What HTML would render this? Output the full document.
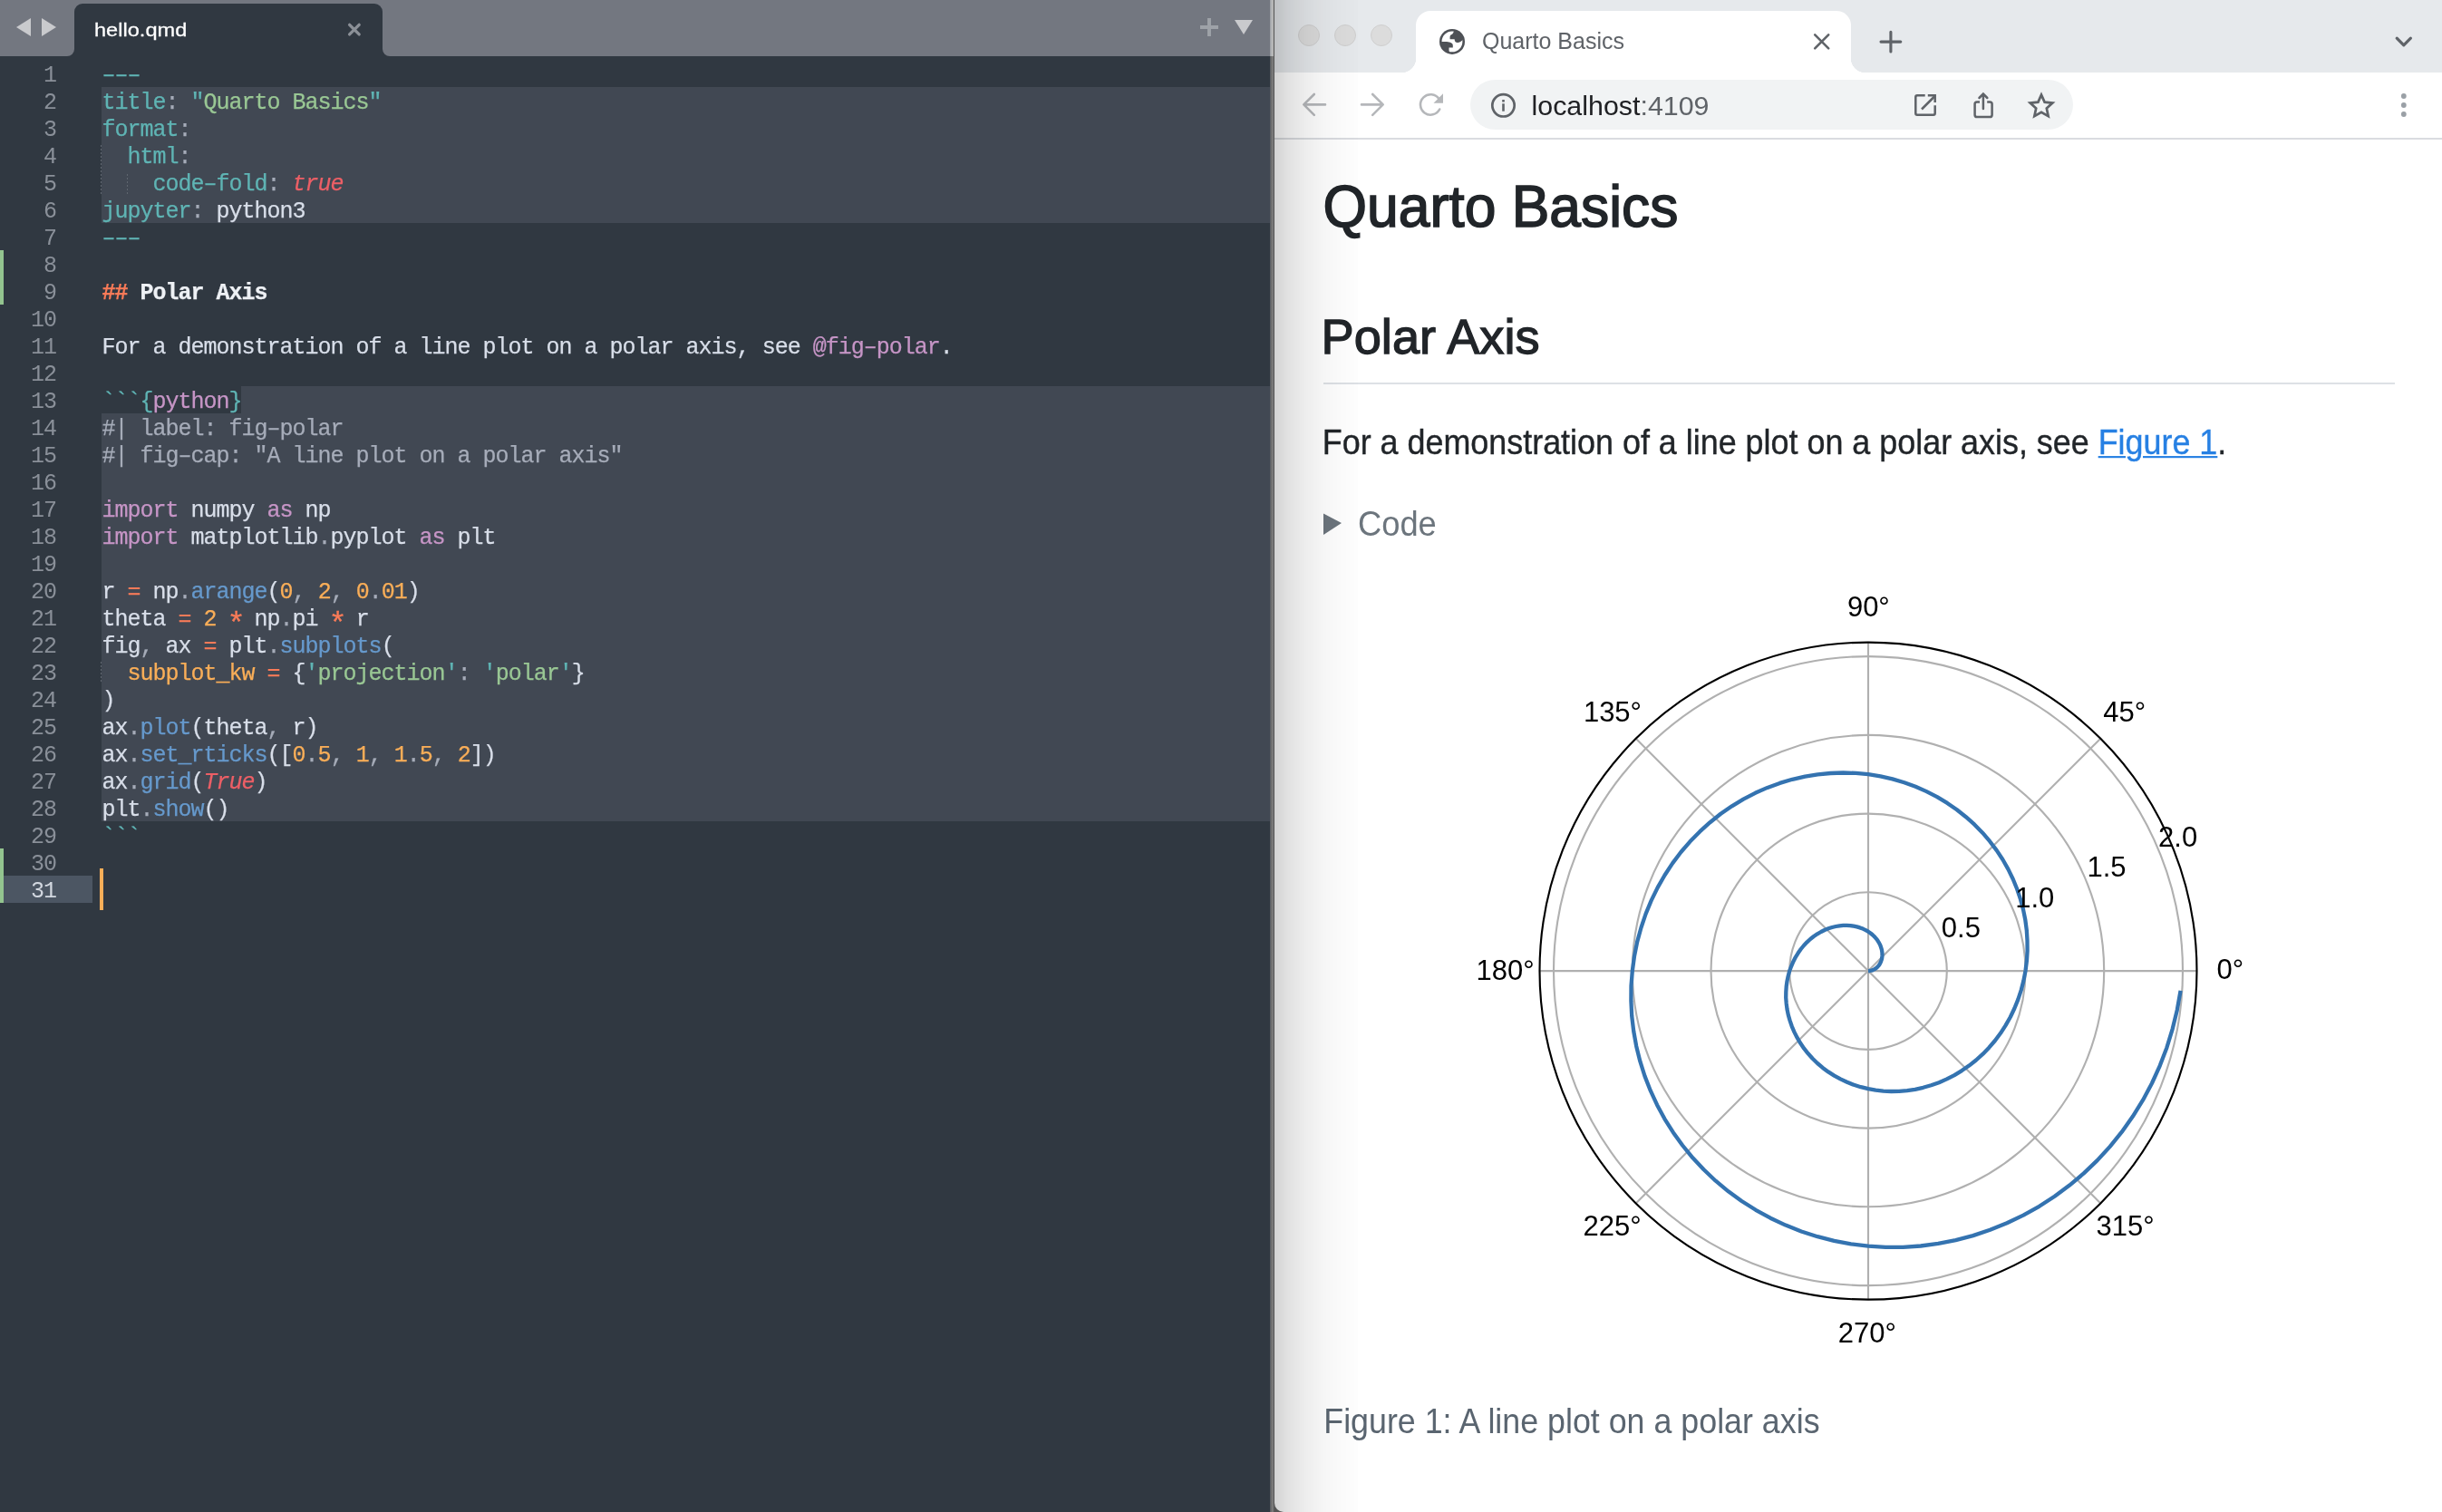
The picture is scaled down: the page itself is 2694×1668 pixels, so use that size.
<!DOCTYPE html>
<html><head><meta charset="utf-8">
<style>
html,body{margin:0;padding:0;}
body{width:2694px;height:1668px;overflow:hidden;position:relative;will-change:transform;background:#303841;font-family:"Liberation Sans",sans-serif;}
.abs{position:absolute;}
#ed{position:absolute;left:0;top:0;width:1402px;height:1668px;background:#303841;overflow:hidden;}
.tb{position:absolute;background:#737780;}
.ln{position:absolute;left:0;width:62px;text-align:right;font-family:"Liberation Mono",monospace;font-size:25px;letter-spacing:-1px;line-height:36px;color:#8a9099;white-space:pre;}
.cl{position:absolute;left:112.5px;font-family:"Liberation Mono",monospace;font-size:25px;letter-spacing:-1px;line-height:36px;color:#d8dee9;white-space:pre;-webkit-text-stroke:0.25px currentColor;}
.ast{display:inline-block;transform:translateY(6px) scale(1.35);}
.ig{position:absolute;width:1.4px;background:repeating-linear-gradient(to bottom,#5f666f 0 2px,transparent 2px 4px);}
.hl{position:absolute;background:#414853;}
.c{color:#5fb4b4}.g{color:#99c794}.p{color:#c695c6}.o{color:#f9ae58}.r{color:#ec5f66;font-style:italic}
.r2{color:#f97b58}.r2b{color:#f97b58;font-weight:bold}.wb{color:#eef1f5;font-weight:bold}.cur{color:#d3d8e0}.b{color:#6699cc}.cm{color:#a6acb9}.pu{color:#a6acb9}.w{color:#d8dee9}
</style></head><body>
<div id="ed">
  <!-- tab bar -->
  <div class="tb" style="left:82px;top:0;width:340px;height:20px;"></div>
  <div class="tb" style="left:0;top:0;width:82px;height:62px;border-bottom-right-radius:8px;"></div>
  <div class="tb" style="left:422px;top:0;width:980px;height:62px;border-bottom-left-radius:8px;"></div>
  <div class="abs" style="left:82px;top:4px;width:340px;height:58px;background:#303841;border-radius:9px 9px 0 0;"></div>
  <svg class="abs" style="left:0;top:0" width="80" height="62"><polygon points="18,30 34,20 34,40" fill="#c9cacd"/><polygon points="46,20 62,30 46,40" fill="#c9cacd"/></svg>
  <div class="abs" style="left:104px;top:16.5px;font-size:23.6px;color:#fff;line-height:30px;-webkit-text-stroke:0.3px #fff;transform:scaleY(0.87);transform-origin:0 24px;">hello.qmd</div>
  <svg class="abs" style="left:376px;top:18px" width="30" height="30"><path d="M9.6 9.3 L20.2 19.9 M20.2 9.3 L9.6 19.9" stroke="#8b9097" stroke-width="3.3" stroke-linecap="round"/></svg>
  <svg class="abs" style="left:1316px;top:12px" width="80" height="36"><path d="M18 8 V28 M8 18 H28" stroke="#9ea2a8" stroke-width="3.9"/><polygon points="46,10 66,10 56,26" fill="#c9cacd"/></svg>

  <!-- highlights -->
  <div class="hl" style="left:112px;top:96px;width:1290px;height:150px;"></div>
  <div class="hl" style="left:266px;top:426px;width:1136px;height:30px;"></div>
  <div class="hl" style="left:112px;top:456px;width:1290px;height:450px;"></div>
  <!-- gutter marks -->
  <div class="abs" style="left:0;top:276px;width:4px;height:60px;background:#93c48f;"></div>
  <div class="abs" style="left:0;top:936px;width:4px;height:60px;background:#93c48f;"></div>
  <div class="abs" style="left:4px;top:966px;width:98px;height:30px;background:#4c5663;"></div>
  <div class="abs" style="left:110px;top:958px;width:4px;height:46px;background:#f9ae58;"></div>

  <div class="ig" style="left:111px;top:160px;height:54px;"></div>
  <div class="ig" style="left:139.5px;top:192px;height:22px;"></div>
  <div class="ig" style="left:111px;top:730px;height:24px;"></div>
  <div id="lines">
<div class="ln" style="top:66px">1</div>
<div class="cl" style="top:66px"><span class="c">–––</span></div>
<div class="ln" style="top:96px">2</div>
<div class="cl" style="top:96px"><span class="c">title</span><span class="pu">:</span><span class="w"> </span><span class="c">"</span><span class="g">Quarto Basics</span><span class="c">"</span></div>
<div class="ln" style="top:126px">3</div>
<div class="cl" style="top:126px"><span class="c">format</span><span class="pu">:</span></div>
<div class="ln" style="top:156px">4</div>
<div class="cl" style="top:156px"><span class="w">  </span><span class="c">html</span><span class="pu">:</span></div>
<div class="ln" style="top:186px">5</div>
<div class="cl" style="top:186px"><span class="w">    </span><span class="c">code–fold</span><span class="pu">:</span><span class="w"> </span><span class="r">true</span></div>
<div class="ln" style="top:216px">6</div>
<div class="cl" style="top:216px"><span class="c">jupyter</span><span class="pu">:</span><span class="w"> python3</span></div>
<div class="ln" style="top:246px">7</div>
<div class="cl" style="top:246px"><span class="c">–––</span></div>
<div class="ln" style="top:276px">8</div>
<div class="ln" style="top:306px">9</div>
<div class="cl" style="top:306px"><span class="r2b">##</span><span class="wb"> Polar Axis</span></div>
<div class="ln" style="top:336px">10</div>
<div class="ln" style="top:366px">11</div>
<div class="cl" style="top:366px"><span class="w">For a demonstration of a line plot on a polar axis, see </span><span class="p">@fig–polar</span><span class="w">.</span></div>
<div class="ln" style="top:396px">12</div>
<div class="ln" style="top:426px">13</div>
<div class="cl" style="top:426px"><span class="c">```{</span><span class="p">python</span><span class="c">}</span></div>
<div class="ln" style="top:456px">14</div>
<div class="cl" style="top:456px"><span class="cm">#| label: fig–polar</span></div>
<div class="ln" style="top:486px">15</div>
<div class="cl" style="top:486px"><span class="cm">#| fig–cap: "A line plot on a polar axis"</span></div>
<div class="ln" style="top:516px">16</div>
<div class="ln" style="top:546px">17</div>
<div class="cl" style="top:546px"><span class="p">import</span><span class="w"> numpy </span><span class="p">as</span><span class="w"> np</span></div>
<div class="ln" style="top:576px">18</div>
<div class="cl" style="top:576px"><span class="p">import</span><span class="w"> matplotlib</span><span class="pu">.</span><span class="w">pyplot </span><span class="p">as</span><span class="w"> plt</span></div>
<div class="ln" style="top:606px">19</div>
<div class="ln" style="top:636px">20</div>
<div class="cl" style="top:636px"><span class="w">r </span><span class="r2">=</span><span class="w"> np</span><span class="pu">.</span><span class="b">arange</span><span class="w">(</span><span class="o">0</span><span class="pu">,</span><span class="o"> 2</span><span class="pu">,</span><span class="o"> 0</span><span class="pu">.</span><span class="o">01</span><span class="w">)</span></div>
<div class="ln" style="top:666px">21</div>
<div class="cl" style="top:666px"><span class="w">theta </span><span class="r2">=</span><span class="o"> 2</span><span class="r2"> <span class="ast">*</span></span><span class="w"> np</span><span class="pu">.</span><span class="w">pi </span><span class="r2"><span class="ast">*</span></span><span class="w"> r</span></div>
<div class="ln" style="top:696px">22</div>
<div class="cl" style="top:696px"><span class="w">fig</span><span class="pu">,</span><span class="w"> ax </span><span class="r2">=</span><span class="w"> plt</span><span class="pu">.</span><span class="b">subplots</span><span class="w">(</span></div>
<div class="ln" style="top:726px">23</div>
<div class="cl" style="top:726px"><span class="w">  </span><span class="o">subplot_kw</span><span class="r2"> =</span><span class="w"> {</span><span class="c">'</span><span class="g">projection</span><span class="c">'</span><span class="pu">:</span><span class="c"> '</span><span class="g">polar</span><span class="c">'</span><span class="w">}</span></div>
<div class="ln" style="top:756px">24</div>
<div class="cl" style="top:756px"><span class="w">)</span></div>
<div class="ln" style="top:786px">25</div>
<div class="cl" style="top:786px"><span class="w">ax</span><span class="pu">.</span><span class="b">plot</span><span class="w">(theta</span><span class="pu">,</span><span class="w"> r)</span></div>
<div class="ln" style="top:816px">26</div>
<div class="cl" style="top:816px"><span class="w">ax</span><span class="pu">.</span><span class="b">set_rticks</span><span class="w">([</span><span class="o">0</span><span class="pu">.</span><span class="o">5</span><span class="pu">,</span><span class="o"> 1</span><span class="pu">,</span><span class="o"> 1</span><span class="pu">.</span><span class="o">5</span><span class="pu">,</span><span class="o"> 2</span><span class="w">])</span></div>
<div class="ln" style="top:846px">27</div>
<div class="cl" style="top:846px"><span class="w">ax</span><span class="pu">.</span><span class="b">grid</span><span class="w">(</span><span class="r">True</span><span class="w">)</span></div>
<div class="ln" style="top:876px">28</div>
<div class="cl" style="top:876px"><span class="w">plt</span><span class="pu">.</span><span class="b">show</span><span class="w">()</span></div>
<div class="ln" style="top:906px">29</div>
<div class="cl" style="top:906px"><span class="c">```</span></div>
<div class="ln" style="top:936px">30</div>
<div class="ln cur" style="top:966px">31</div>
</div>
</div>

<div class="abs" style="left:1404px;top:1640px;width:20px;height:28px;background:#666;"></div>
<div id="br" style="position:absolute;left:1406px;top:0;width:1288px;height:1668px;background:#fff;overflow:hidden;border-bottom-left-radius:10px;">
  <div class="abs" style="left:0;top:0;width:1288px;height:80px;background:#e6e9ec;"></div>
  <svg class="abs" style="left:0;top:0" width="140" height="80">
    <circle cx="38" cy="39" r="11.5" fill="#dcdcdc" stroke="#cfcfcf" stroke-width="1"/>
    <circle cx="78" cy="39" r="11.5" fill="#dcdcdc" stroke="#cfcfcf" stroke-width="1"/>
    <circle cx="118" cy="39" r="11.5" fill="#dcdcdc" stroke="#cfcfcf" stroke-width="1"/>
  </svg>
  <div id="btab" class="abs" style="left:156px;top:12px;width:480px;height:68px;background:#fff;border-radius:16px 16px 0 0;"></div>
  <div class="abs" style="left:140px;top:64px;width:16px;height:16px;background:radial-gradient(circle at 0 0, #e6e9ec 16px, #fff 16.5px);"></div>
  <div class="abs" style="left:636px;top:64px;width:16px;height:16px;background:radial-gradient(circle at 100% 0, #e6e9ec 16px, #fff 16.5px);"></div>
  <div class="abs" style="left:229px;top:27px;font-size:25px;color:#5f6368;line-height:36px;">Quarto Basics</div>
  <div class="abs" style="left:0;top:80px;width:1288px;height:72px;background:#fff;"></div>
  <div class="abs" style="left:0;top:152px;width:1288px;height:2px;background:#dadce0;"></div>
  <div class="abs" style="left:216px;top:88px;width:665px;height:55px;background:#f1f3f4;border-radius:28px;"></div>
  <div class="abs" style="left:283.5px;top:97.5px;font-size:30.4px;color:#202124;line-height:36px;">localhost<span style="color:#5f6368">:4109</span></div>
  <div id="content"></div>
</div>

<!-- page content -->
<div class="abs" style="left:1459.6px;top:198.2px;font-size:62.4px;line-height:62.4px;transform:scaleY(1.03);transform-origin:0 52.8px;color:#212529;-webkit-text-stroke:1.5px #212529;white-space:nowrap">Quarto Basics</div>
<div class="abs" style="left:1457.6px;top:344.1px;font-size:54.2px;line-height:54.2px;color:#212529;-webkit-text-stroke:1.3px #212529;white-space:nowrap">Polar Axis</div>
<div class="abs" style="left:1460px;top:422px;width:1182px;height:2px;background:#dde1e5"></div>
<div class="abs" style="left:1458.8px;top:471.5px;font-size:35.9px;line-height:35.9px;transform:scaleY(1.08);transform-origin:0 30.4px;color:#212529;white-space:nowrap;-webkit-text-stroke:0.35px #212529;">For a demonstration of a line plot on a polar axis, see <span style="color:#2780e3;-webkit-text-stroke:0.35px #2780e3;text-decoration:underline;text-decoration-thickness:2px;text-underline-offset:1.6px">Figure 1</span>.</div>
<svg class="abs" style="left:1458px;top:564px" width="26" height="28"><polygon points="2,2.6 22,13 2,26" fill="#6c757d"/></svg>
<div class="abs" style="left:1498px;top:561.3px;font-size:36.3px;line-height:36.3px;transform:scaleY(1.07);transform-origin:0 30.7px;color:#6c757d;white-space:nowrap">Code</div>
<div class="abs" style="left:1460.3px;top:1551.8px;font-size:35.8px;line-height:35.8px;transform:scaleY(1.08);transform-origin:0 30.3px;color:#5a6570;white-space:nowrap">Figure 1: A line plot on a polar axis</div>
<svg class="abs" style="left:0;top:0" width="2694" height="1668" viewBox="0 0 2694 1668">
<circle cx="2061.0" cy="1071.1" r="86.8" fill="none" stroke="#b0b0b0" stroke-width="2.13"/><circle cx="2061.0" cy="1071.1" r="173.5" fill="none" stroke="#b0b0b0" stroke-width="2.13"/><circle cx="2061.0" cy="1071.1" r="260.2" fill="none" stroke="#b0b0b0" stroke-width="2.13"/><circle cx="2061.0" cy="1071.1" r="347.0" fill="none" stroke="#b0b0b0" stroke-width="2.13"/><line x1="2061.0" y1="1071.1" x2="2423.5" y2="1071.1" stroke="#b0b0b0" stroke-width="2.13"/><line x1="2061.0" y1="1071.1" x2="2317.3" y2="814.8" stroke="#b0b0b0" stroke-width="2.13"/><line x1="2061.0" y1="1071.1" x2="2061.0" y2="708.6" stroke="#b0b0b0" stroke-width="2.13"/><line x1="2061.0" y1="1071.1" x2="1804.7" y2="814.8" stroke="#b0b0b0" stroke-width="2.13"/><line x1="2061.0" y1="1071.1" x2="1698.5" y2="1071.1" stroke="#b0b0b0" stroke-width="2.13"/><line x1="2061.0" y1="1071.1" x2="1804.7" y2="1327.4" stroke="#b0b0b0" stroke-width="2.13"/><line x1="2061.0" y1="1071.1" x2="2061.0" y2="1433.6" stroke="#b0b0b0" stroke-width="2.13"/><line x1="2061.0" y1="1071.1" x2="2317.3" y2="1327.4" stroke="#b0b0b0" stroke-width="2.13"/>
<circle cx="2061.0" cy="1071.1" r="362.5" fill="none" stroke="#000" stroke-width="2.13"/>
<path d="M2061.0,1071.1 L2062.7,1071.0 L2064.4,1070.7 L2066.1,1070.1 L2067.7,1069.4 L2069.3,1068.4 L2070.7,1067.3 L2072.0,1065.9 L2073.2,1064.4 L2074.2,1062.7 L2075.0,1060.9 L2075.7,1058.9 L2076.2,1056.8 L2076.4,1054.7 L2076.5,1052.4 L2076.3,1050.0 L2075.9,1047.7 L2075.2,1045.3 L2074.3,1042.8 L2073.1,1040.4 L2071.7,1038.1 L2070.1,1035.8 L2068.2,1033.6 L2066.0,1031.5 L2063.6,1029.5 L2061.0,1027.7 L2058.2,1026.1 L2055.1,1024.6 L2051.9,1023.4 L2048.5,1022.4 L2044.9,1021.6 L2041.2,1021.1 L2037.4,1020.9 L2033.4,1020.9 L2029.4,1021.3 L2025.3,1022.0 L2021.2,1023.0 L2017.1,1024.3 L2012.9,1026.0 L2008.9,1028.0 L2004.9,1030.3 L2000.9,1033.0 L1997.1,1036.0 L1993.5,1039.3 L1990.0,1043.0 L1986.7,1047.0 L1983.7,1051.3 L1980.9,1055.8 L1978.4,1060.7 L1976.2,1065.8 L1974.2,1071.1 L1972.7,1076.7 L1971.5,1082.4 L1970.7,1088.3 L1970.3,1094.4 L1970.2,1100.6 L1970.7,1106.9 L1971.5,1113.2 L1972.8,1119.6 L1974.6,1125.9 L1976.8,1132.3 L1979.5,1138.6 L1982.6,1144.7 L1986.2,1150.8 L1990.2,1156.7 L1994.7,1162.3 L1999.6,1167.8 L2005.0,1173.0 L2010.8,1177.9 L2016.9,1182.4 L2023.5,1186.6 L2030.4,1190.4 L2037.6,1193.8 L2045.1,1196.8 L2052.9,1199.2 L2061.0,1201.2 L2069.3,1202.7 L2077.7,1203.6 L2086.4,1204.0 L2095.1,1203.9 L2103.9,1203.1 L2112.7,1201.8 L2121.6,1199.8 L2130.4,1197.3 L2139.1,1194.2 L2147.7,1190.4 L2156.1,1186.1 L2164.3,1181.1 L2172.3,1175.6 L2180.0,1169.5 L2187.3,1162.9 L2194.3,1155.7 L2200.9,1148.0 L2207.0,1139.8 L2212.6,1131.1 L2217.8,1122.0 L2222.3,1112.5 L2226.3,1102.6 L2229.7,1092.4 L2232.4,1081.9 L2234.5,1071.1 L2235.9,1060.1 L2236.6,1048.9 L2236.5,1037.6 L2235.8,1026.2 L2234.3,1014.8 L2232.0,1003.4 L2229.0,992.1 L2225.2,980.8 L2220.7,969.8 L2215.4,958.9 L2209.4,948.3 L2202.7,938.1 L2195.2,928.2 L2187.1,918.7 L2178.3,909.7 L2168.8,901.2 L2158.8,893.2 L2148.2,885.9 L2137.0,879.1 L2125.3,873.1 L2113.2,867.8 L2100.7,863.2 L2087.7,859.4 L2074.5,856.4 L2061.0,854.2 L2047.3,852.9 L2033.4,852.5 L2019.4,853.0 L2005.3,854.3 L1991.3,856.6 L1977.3,859.8 L1963.5,863.9 L1949.8,868.9 L1936.4,874.8 L1923.3,881.6 L1910.6,889.3 L1898.3,897.8 L1886.5,907.2 L1875.2,917.4 L1864.5,928.3 L1854.4,940.0 L1845.1,952.4 L1836.5,965.5 L1828.7,979.1 L1821.7,993.4 L1815.6,1008.1 L1810.5,1023.3 L1806.2,1038.9 L1803.0,1054.9 L1800.8,1071.1 L1799.5,1087.6 L1799.4,1104.2 L1800.2,1120.8 L1802.2,1137.5 L1805.2,1154.2 L1809.3,1170.7 L1814.5,1187.1 L1820.8,1203.2 L1828.1,1218.9 L1836.4,1234.3 L1845.8,1249.2 L1856.1,1263.5 L1867.4,1277.3 L1879.6,1290.3 L1892.7,1302.7 L1906.7,1314.3 L1921.4,1325.0 L1936.9,1334.8 L1953.1,1343.7 L1969.9,1351.6 L1987.2,1358.5 L2005.1,1364.2 L2023.4,1368.9 L2042.0,1372.4 L2061.0,1374.7 L2080.2,1375.9 L2099.5,1375.8 L2118.9,1374.5 L2138.2,1371.9 L2157.5,1368.1 L2176.6,1363.1 L2195.4,1356.8 L2214.0,1349.3 L2232.1,1340.6 L2249.7,1330.8 L2266.7,1319.8 L2283.1,1307.6 L2298.8,1294.4 L2313.7,1280.1 L2327.7,1264.9 L2340.8,1248.7 L2352.9,1231.6 L2364.0,1213.7 L2374.0,1195.0 L2382.8,1175.6 L2390.4,1155.7 L2396.7,1135.1 L2401.8,1114.2 L2405.6,1092.8" fill="none" stroke="#3473b0" stroke-width="4.3" stroke-linejoin="round"/>
<g font-family="Liberation Sans" font-size="31" fill="#000"><text x="2037.9" y="679.9">90°</text><text x="2320.2" y="796.2">45°</text><text x="2445.5" y="1079.7">0°</text><text x="2312.5" y="1363.0">315°</text><text x="2027.8" y="1481.0">270°</text><text x="1746.5" y="1363.0">225°</text><text x="1628.5" y="1080.6">180°</text><text x="1746.9" y="796.2">135°</text><text x="2141.8" y="1034.0">0.5</text><text x="2223.2" y="1000.9">1.0</text><text x="2302.5" y="966.9">1.5</text><text x="2381.1" y="933.8">2.0</text></g>
</svg>

<svg class="abs" style="left:0;top:0" width="2694" height="160" viewBox="0 0 2694 160">
 <!-- globe -->
 <defs><clipPath id="gc"><circle cx="1602" cy="45.9" r="12.3"/></clipPath></defs>
 <circle cx="1602" cy="45.9" r="14" fill="#4e5156"/>
 <circle cx="1602" cy="45.9" r="11.4" fill="#fff"/>
 <g clip-path="url(#gc)" fill="#4e5156">
  <path d="M1604.2 30 C1604.5 35 1603 37.5 1601 38.3 C1599.5 39 1599.4 41 1599.6 43.3 L1604.6 43.3 C1604.8 46.5 1606.5 47.3 1608.5 47 C1611 46.7 1612.5 45.3 1614 43.5 L1616 30 Z"/>
  <path d="M1588 46.1 L1596 46.1 C1600 46.4 1602.7 47.5 1602.8 50 L1602.8 52.6 L1598.5 52.6 L1598.5 55.5 C1598.6 57.5 1599.5 59 1601 60 L1588 60 Z"/>
 </g>
 <!-- tab close -->
 <path d="M2002.2 38.4 L2017.2 53.4 M2017.2 38.4 L2002.2 53.4" stroke="#5f6368" stroke-width="2.6" stroke-linecap="round"/>
 <!-- new tab -->
 <path d="M2085.9 35.2 V57 M2075 46.1 H2096.8" stroke="#5f6368" stroke-width="3.1" stroke-linecap="round"/>
 <!-- chevron -->
 <path d="M2644.2 42.2 L2651.8 49.8 L2659.4 42.2" fill="none" stroke="#5f6368" stroke-width="3.2" stroke-linecap="round" stroke-linejoin="round"/>
 <!-- back / forward -->
 <path d="M1462 115.4 H1438.5 M1449.8 104 L1438.3 115.4 L1449.8 126.8" fill="none" stroke="#b5b7ba" stroke-width="2.6" stroke-linecap="round" stroke-linejoin="round"/>
 <path d="M1502 115.4 H1525.5 M1514.2 104 L1525.7 115.4 L1514.2 126.8" fill="none" stroke="#b5b7ba" stroke-width="2.6" stroke-linecap="round" stroke-linejoin="round"/>
 <!-- reload -->
 <path d="M1588.2 120.5 A11.2 11.2 0 1 1 1587.5 109.2" fill="none" stroke="#b5b7ba" stroke-width="2.6" stroke-linecap="round"/>
 <polygon points="1592,103.2 1592,113.8 1581.5,113.8" fill="#b5b7ba"/>
 <!-- info -->
 <circle cx="1658.5" cy="116.3" r="12.2" fill="none" stroke="#5f6368" stroke-width="2.7"/>
 <rect x="1657.2" y="110" width="2.6" height="2.6" fill="#5f6368"/>
 <rect x="1657.2" y="114.3" width="2.6" height="8.4" fill="#5f6368"/>
 <!-- open in -->
 <path d="M2123.7 105.3 H2115 Q2113.3 105.3 2113.3 107 V125 Q2113.3 126.7 2115 126.7 H2133 Q2134.7 126.7 2134.7 125 V116.2" fill="none" stroke="#5f6368" stroke-width="2.5"/>
 <path d="M2126.8 105.3 H2134.7 V113" fill="none" stroke="#5f6368" stroke-width="2.5"/>
 <path d="M2120 120.5 L2134 106.5" stroke="#5f6368" stroke-width="2.5"/>
 <!-- share -->
 <path d="M2184 112.4 H2181 Q2178.6 112.4 2178.6 114.8 V126.7 Q2178.6 129.1 2181 129.1 H2195.2 Q2197.6 129.1 2197.6 126.7 V114.8 Q2197.6 112.4 2195.2 112.4 H2192.2" fill="none" stroke="#5f6368" stroke-width="2.5"/>
 <path d="M2187.9 120 V103.8 M2183.5 108 L2187.9 103.6 L2192.3 108" fill="none" stroke="#5f6368" stroke-width="2.5" stroke-linecap="round"/>
 <!-- star -->
 <polygon points="2252.00,104.60 2255.59,112.66 2264.36,113.58 2257.81,119.49 2259.64,128.12 2252.00,123.71 2244.36,128.12 2246.19,119.49 2239.64,113.58 2248.41,112.66" fill="none" stroke="#5f6368" stroke-width="2.7" stroke-linejoin="miter"/>
 <!-- kebab -->
 <circle cx="2651.8" cy="106" r="2.9" fill="#9aa0a6"/>
 <circle cx="2651.8" cy="116" r="2.9" fill="#9aa0a6"/>
 <circle cx="2651.8" cy="126" r="2.9" fill="#9aa0a6"/>
</svg>
<!-- divider & shadow -->
<div class="abs" style="left:1401px;top:0;width:4px;height:62px;background:linear-gradient(to right,#9a9ea4,#bcbcbc 60%,#a8a8a8);"></div>
<div class="abs" style="left:1401px;top:62px;width:4px;height:1606px;background:linear-gradient(to right,#555b63,#6a6a6a 35%,#808080 70%,#6c6c6c);"></div>
<div class="abs" style="left:1405px;top:0;width:1px;height:1668px;background:#5a5a5a;"></div>
<div class="abs" style="left:1406px;top:0;width:92px;height:1668px;background:linear-gradient(to right,rgba(0,0,0,0.175),rgba(0,0,0,0.15) 6px,rgba(0,0,0,0.115) 16px,rgba(0,0,0,0.07) 34px,rgba(0,0,0,0.035) 55px,rgba(0,0,0,0.015) 75px,rgba(0,0,0,0.008) 92px);pointer-events:none"></div>

</body></html>
